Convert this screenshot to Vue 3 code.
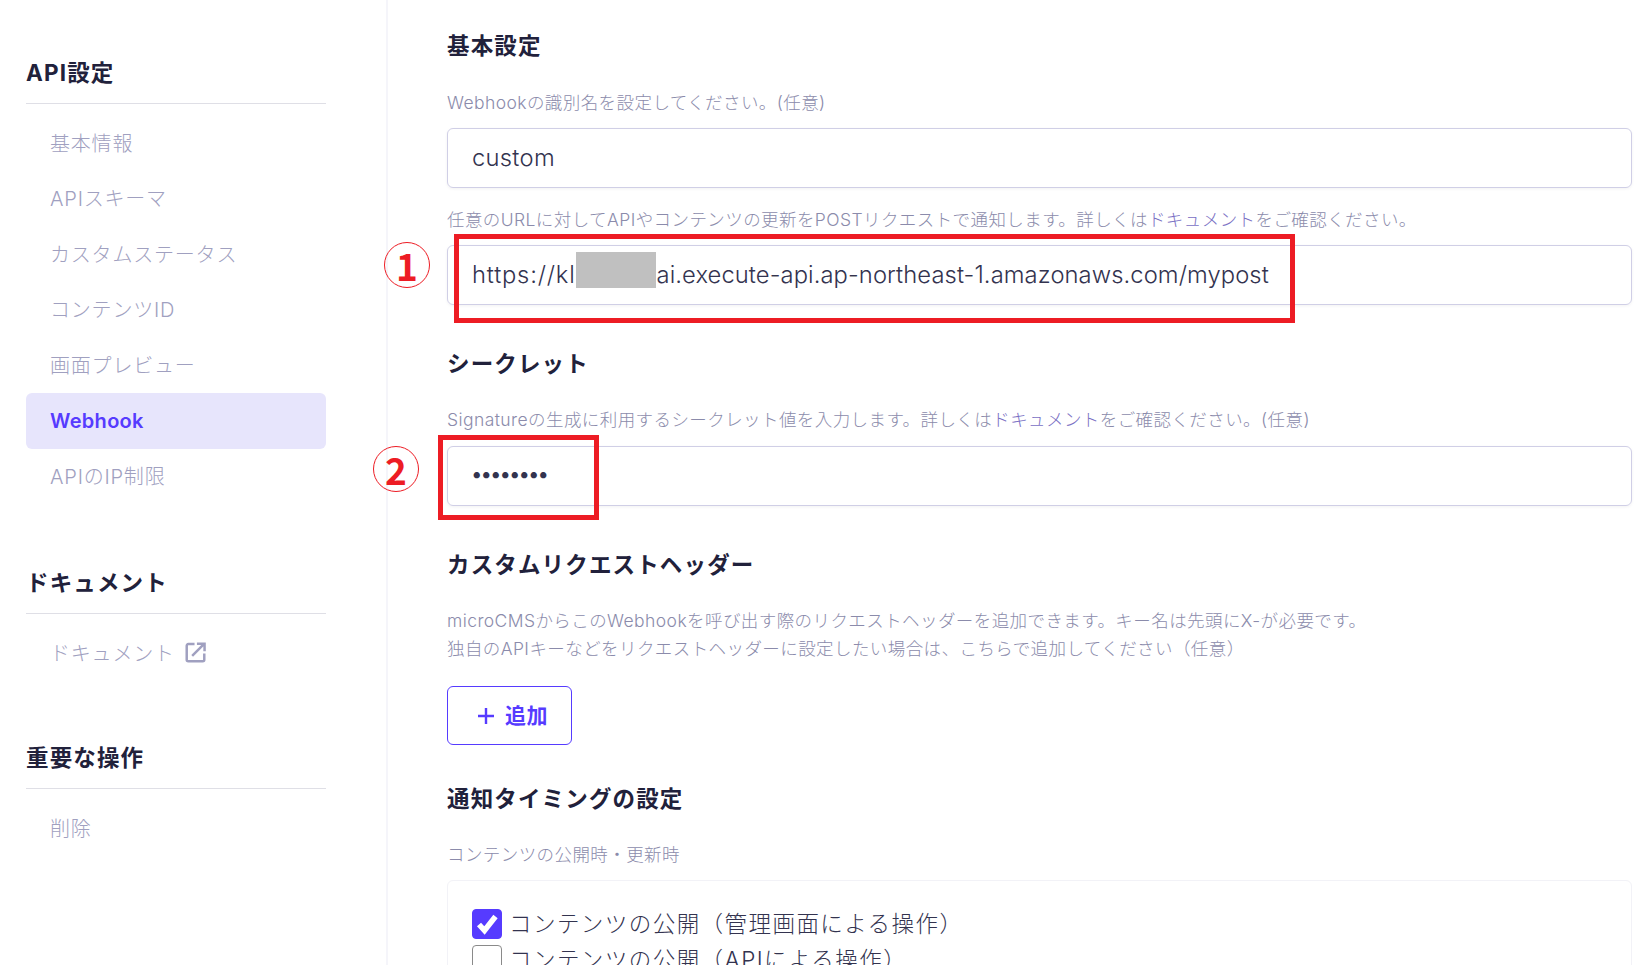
<template>
  <div class="page">
    <aside class="side">
      <section v-for="group in groups" :key="group.title" class="side-group">
        <h2 class="side-title">{{ group.title }}</h2>
        <ul class="side-list">
          <li v-for="item in group.items" :key="item" class="side-item" :class="{ active: item === 'Webhook' }">
            {{ item }}
            <svg v-if="group.external" class="ext" viewBox="0 0 22 22" fill="none" stroke="currentColor" stroke-width="2.6">
              <path d="M10 2.2H3.4a1.6 1.6 0 0 0-1.6 1.6v14.8a1.6 1.6 0 0 0 1.6 1.6h15.2a1.6 1.6 0 0 0 1.6-1.6V12" />
              <path d="M7.5 14.5 19.5 2.5M12.5 1.8h8v8" />
            </svg>
          </li>
        </ul>
      </section>
    </aside>

    <main class="main">
      <h2 class="title first">基本設定</h2>
      <p class="desc top">Webhookの識別名を設定してください。(任意)</p>
      <div class="input">custom</div>

      <p class="desc second">任意のURLに対してAPIやコンテンツの更新をPOSTリクエストで通知します。詳しくは<a>ドキュメント</a>をご確認ください。</p>
      <div class="input url"><span class="head">https://kl</span><span class="masked"></span>ai.execute-api.ap-northeast-1.amazonaws.com/mypost</div>

      <h2 class="title">シークレット</h2>
      <p class="desc secret">Signatureの生成に利用するシークレット値を入力します。詳しくは<a>ドキュメント</a>をご確認ください。(任意)</p>
      <div class="input dots">••••••••</div>

      <h2 class="title headers">カスタムリクエストヘッダー</h2>
      <p class="desc two-line">microCMSからこのWebhookを呼び出す際のリクエストヘッダーを追加できます。キー名は先頭にX-が必要です。<br />独自のAPIキーなどをリクエストヘッダーに設定したい場合は、こちらで追加してください（任意）</p>
      <button class="add">
        <svg viewBox="0 0 18 18" class="plus" fill="none" stroke="currentColor" stroke-width="2.4"><path d="M9 1v16M1 9h16" /></svg>
        <span class="add-label">追加</span>
      </button>

      <h2 class="title">通知タイミングの設定</h2>
      <p class="desc">コンテンツの公開時・更新時</p>
      <div class="box">
        <label v-for="c in checks" :key="c.label" class="check">
          <span class="mark" :class="{ on: c.on }">
            <svg v-if="c.on" viewBox="0 0 30 30" fill="none" stroke="#fff" stroke-width="5.5"><path d="M7 15.5l5.5 6L23.5 7.5" /></svg>
          </span>
          <span class="check-label">{{ c.label }}</span>
        </label>
      </div>
    </main>

    <!-- 注釈 -->
    <div class="mark-box one"></div>
    <div class="mark-box two"></div>
    <span class="num n1">1</span>
    <span class="num n2">2</span>
  </div>
</template>

<script setup>
const groups = [
  { title: 'API設定', items: ['基本情報', 'APIスキーマ', 'カスタムステータス', 'コンテンツID', '画面プレビュー', 'Webhook', 'APIのIP制限'] },
  { title: 'ドキュメント', items: ['ドキュメント'], external: true },
  { title: '重要な操作', items: ['削除'] }
]

const checks = [
  { label: 'コンテンツの公開（管理画面による操作）', on: true },
  { label: 'コンテンツの公開（APIによる操作）', on: false }
]
</script>

<style>
html, body {
  margin: 0;
  height: 100%;
  overflow: hidden;
  background: #fff;
}
</style>

<style scoped>
.page {
  position: relative;
  display: flex;
  height: 965px;
  overflow: hidden;
  font-family: Inter, "Noto Sans CJK JP", sans-serif;
  color: #21213b;
}

.side {
  width: 388px;
  box-sizing: border-box;
  padding: 51px 60px 0 26px;
  border-right: 2px solid #f5f5fa;
  flex-shrink: 0;
}

.side-group + .side-group {
  margin-top: 57px;
}

.side-group:last-child {
  margin-top: 54px;
}

.side-title {
  margin: 0;
  padding-bottom: 8px;
  border-bottom: 1px solid #dfdfe6;
  font-size: 22.5px;
  line-height: 44px;
  font-weight: 700;
  letter-spacing: 1.15px;
}

.side-list {
  list-style: none;
  margin: 11.5px 0 0;
  padding: 0;
}

.side-group:nth-child(2) .side-list {
  margin-top: 12px;
}

.side-group:last-child .side-list {
  margin-top: 12px;
}

.side-item {
  display: flex;
  align-items: center;
  height: 55.5px;
  box-sizing: border-box;
  padding: 0 0 2px 24px;
  font-size: 20px;
  font-weight: 300;
  letter-spacing: 0.8px;
  color: #a0a0c0;
  border-radius: 6px;
}

.side-item.active {
  padding-bottom: 0;
  background: #e7e5fc;
  color: #563bff;
  font-size: 20px;
  font-weight: 600;
  letter-spacing: 0.3px;
}

.ext {
  width: 21px;
  height: 21px;
  margin-left: 10px;
}

.main {
  flex: 1;
  padding: 0 18px 0 59px;
}

.title {
  margin: 37px 0 0;
  font-size: 22.5px;
  line-height: 44px;
  font-weight: 700;
  letter-spacing: 1.15px;
}

.title.first {
  margin-top: 24px;
}

.desc {
  margin: 20px 0 12px;
  font-size: 17.5px;
  line-height: 27px;
  font-weight: 300;
  letter-spacing: 0.42px;
  color: #8b8bab;
}

.desc.top {
  margin-top: 21px;
}

.desc.second {
  margin-top: 18px;
}

.desc.secret {
  margin-bottom: 13px;
}

.desc.two-line {
  line-height: 28px;
}

.desc a {
  color: #7a70c4;
}

.input {
  display: flex;
  align-items: center;
  height: 60px;
  box-sizing: border-box;
  padding: 0 0 2px 24px;
  border: 1px solid #d0cfe6;
  border-radius: 6px;
  box-shadow: 0 1px 3px rgba(33, 33, 59, 0.06);
  font-size: 23.75px;
  font-weight: 300;
  letter-spacing: 0.28px;
  color: #33334f;
}

.url {
  letter-spacing: 0.09px;
}

.head {
  letter-spacing: 0.8px;
}

.dots {
  padding-bottom: 4px;
  font-size: 20px;
  font-weight: 700;
  letter-spacing: 0;
}

.masked {
  display: inline-block;
  width: 81px;
  height: 36px;
}

.add {
  display: flex;
  align-items: center;
  justify-content: center;
  gap: 10px;
  width: 125px;
  height: 59px;
  margin-top: 23px;
  padding: 0 0 3px 6px;
  background: #fff;
  border: 1px solid #563bff;
  border-radius: 6px;
  color: #563bff;
  font-family: inherit;
  font-size: 21px;
  font-weight: 600;
}

.add-label {
  letter-spacing: 0.5px;
}

.plus {
  width: 18px;
  height: 18px;
  margin-top: 3px;
}

.add + .title {
  margin-top: 32px;
}

.box {
  margin-top: 12px;
  padding: 25px 24px 30px;
  border: 1px solid #f2f2f7;
  border-radius: 6px;
}

.check {
  display: flex;
  align-items: center;
  gap: 7px;
  height: 36px;
  font-size: 22.5px;
  font-weight: 300;
  letter-spacing: 1.45px;
  color: #33334f;
}

.check-label {
  margin-top: -4px;
}

.mark {
  display: block;
  width: 30px;
  height: 30px;
  box-sizing: border-box;
  border: 1px solid #8a8a8a;
  border-radius: 4px;
  flex-shrink: 0;
}

.mark.on {
  background: #563bff;
  border-color: #563bff;
}

.mark svg {
  display: block;
  margin: -1px;
  width: 30px;
  height: 30px;
}

.mark-box {
  position: absolute;
  box-sizing: border-box;
  border: 5px solid #ed1c24;
}

.mark-box.one {
  left: 454px;
  top: 234px;
  width: 841px;
  height: 89px;
}

.mark-box.one::after {
  content: "";
  position: absolute;
  left: 117px;
  top: 13px;
  width: 80px;
  height: 36px;
  background: #c0c0c0;
}

.mark-box.two {
  left: 438px;
  top: 435px;
  width: 161px;
  height: 85px;
}

.num {
  position: absolute;
  display: flex;
  align-items: center;
  justify-content: center;
  box-sizing: border-box;
  width: 46px;
  height: 46px;
  border: 1.5px solid #ed1c24;
  border-radius: 50%;
  color: #ed1c24;
  font-family: "Noto Sans CJK JP", sans-serif;
  font-size: 37px;
  font-weight: 700;
  line-height: 1;
}

.n1 {
  left: 384px;
  top: 242px;
}

.n2 {
  left: 373px;
  top: 446px;
}
</style>
